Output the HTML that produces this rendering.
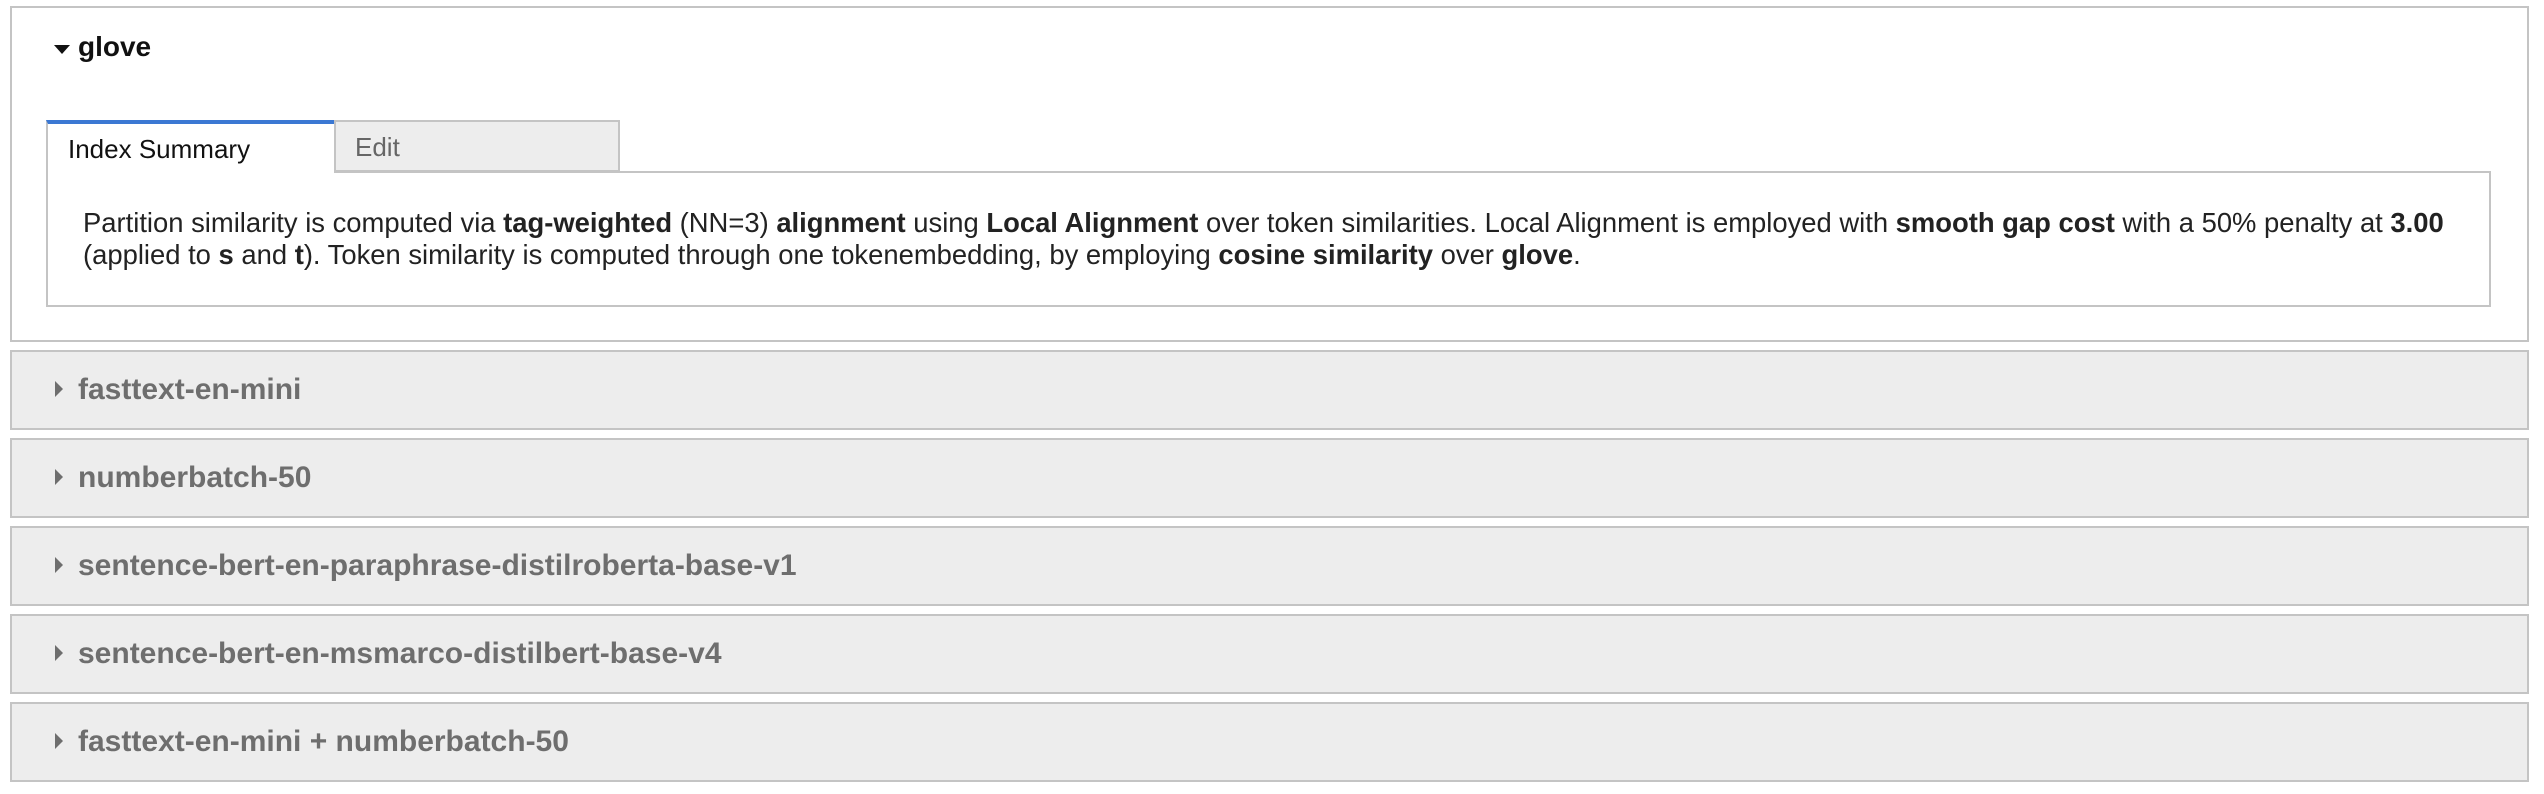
<!DOCTYPE html>
<html><head><meta charset="utf-8"><style>
*{box-sizing:border-box;margin:0;padding:0}
body{width:2544px;height:794px;background:#fff;font-family:"Liberation Sans",Arial,sans-serif;position:relative;overflow:hidden}
.box{position:absolute;left:10px;width:2519px;border:2px solid #c4c4c4}
.open{top:6px;height:336px;background:#fff}
.col{height:80px;background:#ededed}
.hdr{position:absolute;left:66px;font-weight:bold;font-size:30px;white-space:nowrap}
.tri{position:absolute;width:0;height:0}
.col .hdr{color:#6e6e6e;top:21px}
.col .tri{left:43px;top:29px;border-top:8px solid transparent;border-bottom:8px solid transparent;border-left:8px solid #6e6e6e}
.tab{position:absolute;top:112px;height:52px;font-size:26px;padding:10px 0 0 20px}
.t1{left:34px;width:288px;border-top:4px solid #3b78d3;border-left:2px solid #c4c4c4;color:#111;background:#fff;z-index:2;height:54px}
.t2{left:322px;width:286px;background:#ededed;border:2px solid #c4c4c4;color:#666;padding-left:19px}
.content{position:absolute;left:34px;top:163px;width:2445px;height:136px;border:2px solid #c4c4c4;padding:34px 0 0 35px;font-size:27.4px;line-height:32px;color:#222;white-space:nowrap}
b{font-weight:bold}
</style></head><body>
<div class="box open">
  <div class="tri" style="left:42px;top:37px;border-left:8px solid transparent;border-right:8px solid transparent;border-top:9px solid #111"></div>
  <div class="hdr" style="top:23px;color:#111;left:66px;font-size:28px">glove</div>
  <div class="tab t1">Index Summary</div>
  <div class="tab t2">Edit</div>
  <div class="content">Partition similarity is computed via <b>tag-weighted</b> (NN=3) <b>alignment</b> using <b>Local Alignment</b> over token similarities. Local Alignment is employed with <b>smooth gap cost</b> with a 50% penalty at <b>3.00</b><br>(applied to <b>s</b> and <b>t</b>). Token similarity is computed through one tokenembedding, by employing <b>cosine similarity</b> over <b>glove</b>.</div>
</div>
<div class="box col" style="top:350px"><div class="tri"></div><div class="hdr">fasttext-en-mini</div></div>
<div class="box col" style="top:438px"><div class="tri"></div><div class="hdr">numberbatch-50</div></div>
<div class="box col" style="top:526px"><div class="tri"></div><div class="hdr">sentence-bert-en-paraphrase-distilroberta-base-v1</div></div>
<div class="box col" style="top:614px"><div class="tri"></div><div class="hdr">sentence-bert-en-msmarco-distilbert-base-v4</div></div>
<div class="box col" style="top:702px"><div class="tri"></div><div class="hdr">fasttext-en-mini + numberbatch-50</div></div>
</body></html>
